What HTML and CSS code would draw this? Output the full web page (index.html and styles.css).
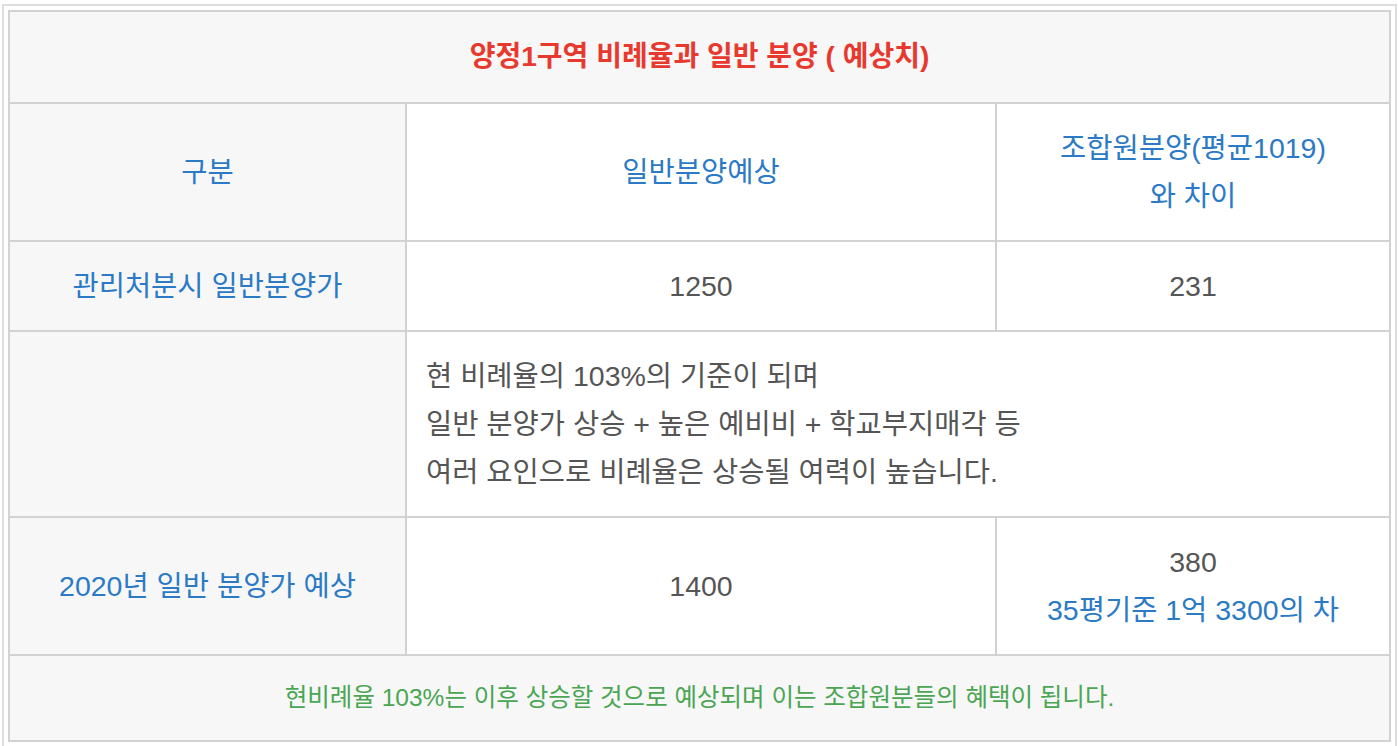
FILE: index.html
```html
<!DOCTYPE html>
<html lang="ko">
<head>
<meta charset="utf-8">
<title>양정1구역 비례율과 일반 분양</title>
<link rel="stylesheet" href="styles.css">
</head>
<body>
<div class="wrap">
  <table class="grid">
    <colgroup>
      <col class="c1">
      <col class="c2">
      <col class="c3">
    </colgroup>
    <tr>
      <td colspan="3" class="title gray">양정1구역 비례율과 일반 분양 ( 예상치)</td>
    </tr>
    <tr>
      <td class="gray blue">구분</td>
      <td class="blue">일반분양예상</td>
      <td class="blue">조합원분양(평균1019)<br>와 차이</td>
    </tr>
    <tr>
      <td class="gray blue">관리처분시 일반분양가</td>
      <td>1250</td>
      <td>231</td>
    </tr>
    <tr>
      <td class="gray"></td>
      <td colspan="2" class="left">현 비례율의 103%의 기준이 되며<br>일반 분양가 상승 + 높은 예비비 + 학교부지매각 등<br>여러 요인으로 비례율은 상승될 여력이 높습니다.</td>
    </tr>
    <tr>
      <td class="gray blue">2020년 일반 분양가 예상</td>
      <td>1400</td>
      <td>380<br><span class="blue">35평기준 1억 3300의 차</span></td>
    </tr>
    <tr>
      <td colspan="3" class="gray green foot">현비례율 103%는 이후 상승할 것으로 예상되며 이는 조합원분들의 혜택이 됩니다.</td>
    </tr>
  </table>
</div>
</body>
</html>
```
FILE: styles.css
```css
html, body {
  margin: 0;
  padding: 0;
  background: #ffffff;
}
body {
  padding: 4px 1px 0 2px;
  font-family: "Liberation Sans", "Noto Sans CJK KR", sans-serif;
  color: #555555;
}
.wrap {
  border: 2px solid #dddddd;
  padding: 4px;
}
.grid {
  width: 100%;
  border-collapse: collapse;
  table-layout: fixed;
}
.c1 { width: 397px; }
.c2 { width: 590px; }
.c3 { width: auto; }
.grid td {
  border: 2px solid #d2d2d2;
  text-align: center;
  vertical-align: middle;
  font-size: 28.5px;
  line-height: 48px;
  padding: 20px 20px;
  background: #ffffff;
}
.grid td.gray { background: #f7f7f7; }
.grid td.left { text-align: left; padding: 20px 19px; }
.grid td.title {
  color: #e8392f;
  font-weight: bold;
  font-size: 28px;
  padding: 21px 20px;
}
.blue { color: #2b7ac6; }
.green { color: #4aa653; }
.grid td.foot {
  font-size: 24.5px;
  line-height: 44px;
  padding: 20px 20px;
}
```
